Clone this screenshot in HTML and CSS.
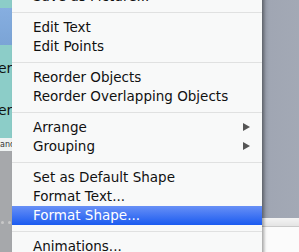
FILE: index.html
```html
<!DOCTYPE html>
<html lang="en">
<head>
    <meta charset="UTF-8">
    <title>Shape Context Menu</title>
    <link rel="stylesheet" href="styles.css">
</head>
<body>
    <div class="screen">
        <!-- Slide behind the menu (left) -->
        <div class="slide">
            <div class="slide-title"></div>
            <div class="slide-text first">er</div>
            <div class="slide-text second">er</div>
            <div class="slide-strip">and</div>
            <div class="slide-gray">
                <div class="dots"><span></span><span></span></div>
            </div>
        </div>

        <!-- Context Menu -->
        <div class="menu">
            <div class="item">Save as Picture...</div>
            <div class="sep"></div>
            <div class="item">Edit Text</div>
            <div class="item">Edit Points</div>
            <div class="sep"></div>
            <div class="item">Reorder Objects</div>
            <div class="item">Reorder Overlapping Objects</div>
            <div class="sep"></div>
            <div class="item sub">Arrange</div>
            <div class="item sub">Grouping</div>
            <div class="sep"></div>
            <div class="item">Set as Default Shape</div>
            <div class="item">Format Text...</div>
            <div class="item active">Format Shape...</div>
            <div class="sep"></div>
            <div class="item">Animations...</div>
        </div>

        <!-- Window chrome (right) -->
        <div class="side">
            <div class="side-top"></div>
            <div class="side-bar"></div>
            <div class="side-bottom"></div>
        </div>
    </div>
</body>
</html>
```

FILE: styles.css
```css
/* Basic Reset */
body {
    margin: 0;
    font-family: "DejaVu Sans", sans-serif;
    background-color: #a0a6b3;
    overflow: hidden;
}

.screen {
    display: flex;
    height: 252px;
    overflow: hidden;
}

/* Slide on the left */
.slide {
    width: 12px;
    flex-shrink: 0;
    display: flex;
    flex-direction: column;
    background-color: #8ccdc8;
    overflow: hidden;
}

.slide-title {
    height: 37px;
    margin-top: 8px;
    background: linear-gradient(#86aee0, #7ba4d6);
}

.slide-text {
    height: 19px;
    font-size: 14px;
    line-height: 19px;
    color: #111;
    margin-left: -2px;
}

.slide-text.first {
    margin-top: 14px;
}

.slide-text.second {
    margin-top: 23px;
}

.slide-strip {
    height: 13px;
    margin-top: 18px;
    background-color: #eef2f2;
    font-size: 8px;
    line-height: 13px;
    color: #333;
}

.slide-gray {
    flex: 1;
    background-color: #a6a8ab;
    padding-top: 70px;
}

.dots {
    display: flex;
    gap: 4px;
    padding-left: 1px;
}

.dots span {
    width: 3px;
    height: 3px;
    border-radius: 50%;
    background-color: #c8c8c8;
}

/* Context Menu */
.menu {
    width: 250px;
    flex-shrink: 0;
    margin-top: -13px;
    background-color: #f8f9f9;
    box-shadow: 2px 0 3px rgba(0, 0, 0, 0.35);
    position: relative;
    z-index: 2;
    align-self: flex-start;
    padding-bottom: 10px;
}

.item {
    height: 19px;
    line-height: 19px;
    padding-left: 21px;
    font-size: 13.5px;
    color: #111;
    white-space: nowrap;
    position: relative;
}

.item.sub::after {
    content: "";
    position: absolute;
    right: 12px;
    top: 5px;
    border-left: 7px solid #555;
    border-top: 4.5px solid transparent;
    border-bottom: 4.5px solid transparent;
}

.item.active {
    background: linear-gradient(#6890f6, #1b5bf0);
    color: #fff;
}

.sep {
    height: 12px;
    display: flex;
    align-items: center;
}

.sep::before {
    content: "";
    flex: 1;
    height: 1px;
    background-color: #e0e1e1;
}

/* Window chrome on the right */
.side {
    flex: 1;
    display: flex;
    flex-direction: column;
}

.side-top {
    height: 218px;
    background: linear-gradient(90deg, #8f95a2, #a0a6b3 20%, #a3a9b5);
}

.side-bar {
    height: 8px;
    background: linear-gradient(#f4f4f4, #e4e4e4);
    border-bottom: 1px solid #c9c9c9;
}

.side-bottom {
    flex: 1;
    background-color: #fbfbfb;
}
```
